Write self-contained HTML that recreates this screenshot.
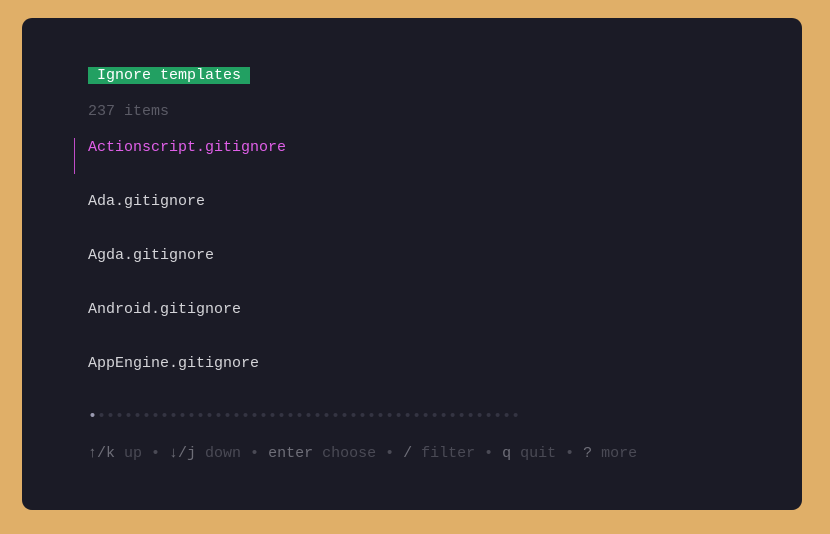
<!DOCTYPE html>
<html><head><meta charset="utf-8"><style>
html,body{margin:0;padding:0}
body{width:830px;height:534px;background:#e0af68;position:relative;overflow:hidden;font-family:"Liberation Mono","DejaVu Sans Mono",monospace;font-size:15px}
.card{position:absolute;left:22px;top:18px;width:780px;height:492px;background:#1b1b26;border-radius:10px}
.l{position:absolute;left:88px;height:18px;line-height:18px;white-space:pre;color:#d4d4d8}
.title{background:#22a062;color:#fff;left:88px;height:17px}
.dim{color:#5b5b66}
.sel{color:#e05fe8}
.bar{position:absolute;left:74px;top:138px;width:1px;height:36px;background:#c04cc8}
.h{color:#4a4a55}.k{color:#6e6e78}
</style></head><body>
<div class="card"></div>
<div class="l title" style="top:67px"> Ignore templates </div>
<div class="l dim" style="top:103px">237 items</div>
<div class="bar"></div>
<div class="l sel" style="top:139px">Actionscript.gitignore</div>
<div class="l" style="top:193px">Ada.gitignore</div>
<div class="l" style="top:247px">Agda.gitignore</div>
<div class="l" style="top:301px">Android.gitignore</div>
<div class="l" style="top:355px">AppEngine.gitignore</div>
<div class="l" style="top:408px;color:#343442"><span style="color:#9a9ab0">•</span>•••••••••••••••••••••••••••••••••••••••••••••••</div>
<div class="l h" style="top:445px"><span class="k">↑/k</span> up • <span class="k">↓/j</span> down • <span class="k">enter</span> choose • <span class="k">/</span> filter • <span class="k">q</span> quit • <span class="k">?</span> more</div>
</body></html>
